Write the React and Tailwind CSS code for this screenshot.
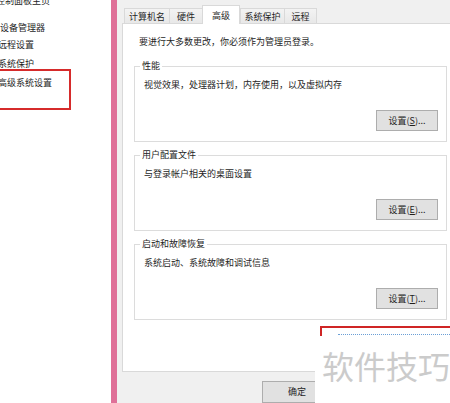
import React from "react";

function Tab({ label, w, selected }) {
  if (selected) {
    return (
      <div
        className="relative z-10 flex h-[19px] items-start justify-center border border-b-0 border-[#d9d9d9] bg-white pt-[3px]"
        style={{ width: w }}
      >
        {label}
      </div>
    );
  }
  return (
    <div
      className="mb-[1px] flex h-[15px] items-center justify-center border border-b-0 border-r-0 border-[#d9d9d9] bg-gradient-to-b from-[#f3f3f3] to-[#e8e8e8]"
      style={{ width: w }}
    >
      {label}
    </div>
  );
}

function SetButton({ k }) {
  return (
    <div className="flex justify-end pr-[8px]">
      <div className="flex h-[21px] w-[62px] items-center justify-center border border-[#adadad] bg-[#e1e1e1] leading-none">
        <span>
          设置(<span className="underline">{k}</span>)...
        </span>
      </div>
    </div>
  );
}

function Group({ title, text, k, className }) {
  return (
    <fieldset className={"ml-[11px] w-[313px] border border-[#dcdcdc] px-0 pb-[10px] " + className}>
      <legend className="ml-[5px] px-[2px] leading-[12px]">{title}</legend>
      <div className="pl-[9px] pt-[7px] leading-[12px]">{text}</div>
      <div className="mt-[19px]">
        <SetButton k={k} />
      </div>
    </fieldset>
  );
}

export default function App() {
  return (
    <div className="relative flex h-[403px] w-[450px] overflow-hidden bg-white text-[9px] text-[#1e1e1e] font-['Noto_Sans_CJK_SC',sans-serif]">
      {/* left nav */}
      <div className="w-[111px] shrink-0 bg-white leading-[12px]">
        <div className="ml-[-4px] mt-[-5px]">控制面板主页</div>
        <div className="ml-[0px] mt-[15px]">设备管理器</div>
        <div className="ml-[-2px] mt-[5px]">远程设置</div>
        <div className="ml-[-2px] mt-[7px]">系统保护</div>
        <div className="ml-[-2px] mt-[7px]">高级系统设置</div>
      </div>
      {/* pink window border */}
      <div className="w-[6px] shrink-0 bg-[#df7098]" />
      {/* dialog */}
      <div className="flex w-[340px] shrink-0 flex-col bg-[#f0f0f0] pl-[5px]">
        <div className="flex h-[25px] items-end pl-[2px]">
          <Tab label="计算机名" w={45} />
          <Tab label="硬件" w={33} />
          <Tab label="高级" w={38} selected />
          <Tab label="系统保护" w={44} />
          <div className="mb-[1px] flex h-[15px] w-[33px] items-center justify-center border border-b-0 border-[#d9d9d9] bg-gradient-to-b from-[#f3f3f3] to-[#e8e8e8]">
            远程
          </div>
        </div>
        <div className="mt-[-1px] h-[357px] w-[335px] border border-[#d9d9d9] bg-white">
          <div className="pl-[16px] pt-[12px] leading-[12px]">要进行大多数更改，你必须作为管理员登录。</div>
          <Group className="mt-[12px]" title="性能" text="视觉效果，处理器计划，内存使用，以及虚拟内存" k="S" />
          <Group className="mt-[7px]" title="用户配置文件" text="与登录帐户相关的桌面设置" k="E" />
          <Group className="mt-[7px]" title="启动和故障恢复" text="系统启动、系统故障和调试信息" k="T" />
        </div>
        <div className="pl-[140px] pt-[9px]">
          <div className="flex h-[22px] w-[70px] items-center justify-center border border-[#adadad] bg-[#e1e1e1]">
            确定
          </div>
        </div>
      </div>

      {/* annotation: red highlight on left nav */}
      <div className="absolute left-[-3px] top-[69px] h-[41px] w-[74px] border-2 border-[#d62b2b]" />
      {/* annotation: red highlight near bottom right */}
      <div className="absolute left-[320px] top-[326px] h-[30px] w-[140px] border-2 border-[#cf2525]" />
      <div className="absolute left-[338px] top-[334px] h-0 w-[120px] border-t border-dotted border-[#6b9fd6]" />
      {/* watermark */}
      <div className="absolute left-[315px] top-[336px] h-[67px] w-[135px] bg-white pl-[7px] pt-[13px] text-[32px] leading-[32px] text-[#cbcbcb]">
        软件技巧
      </div>
    </div>
  );
}
